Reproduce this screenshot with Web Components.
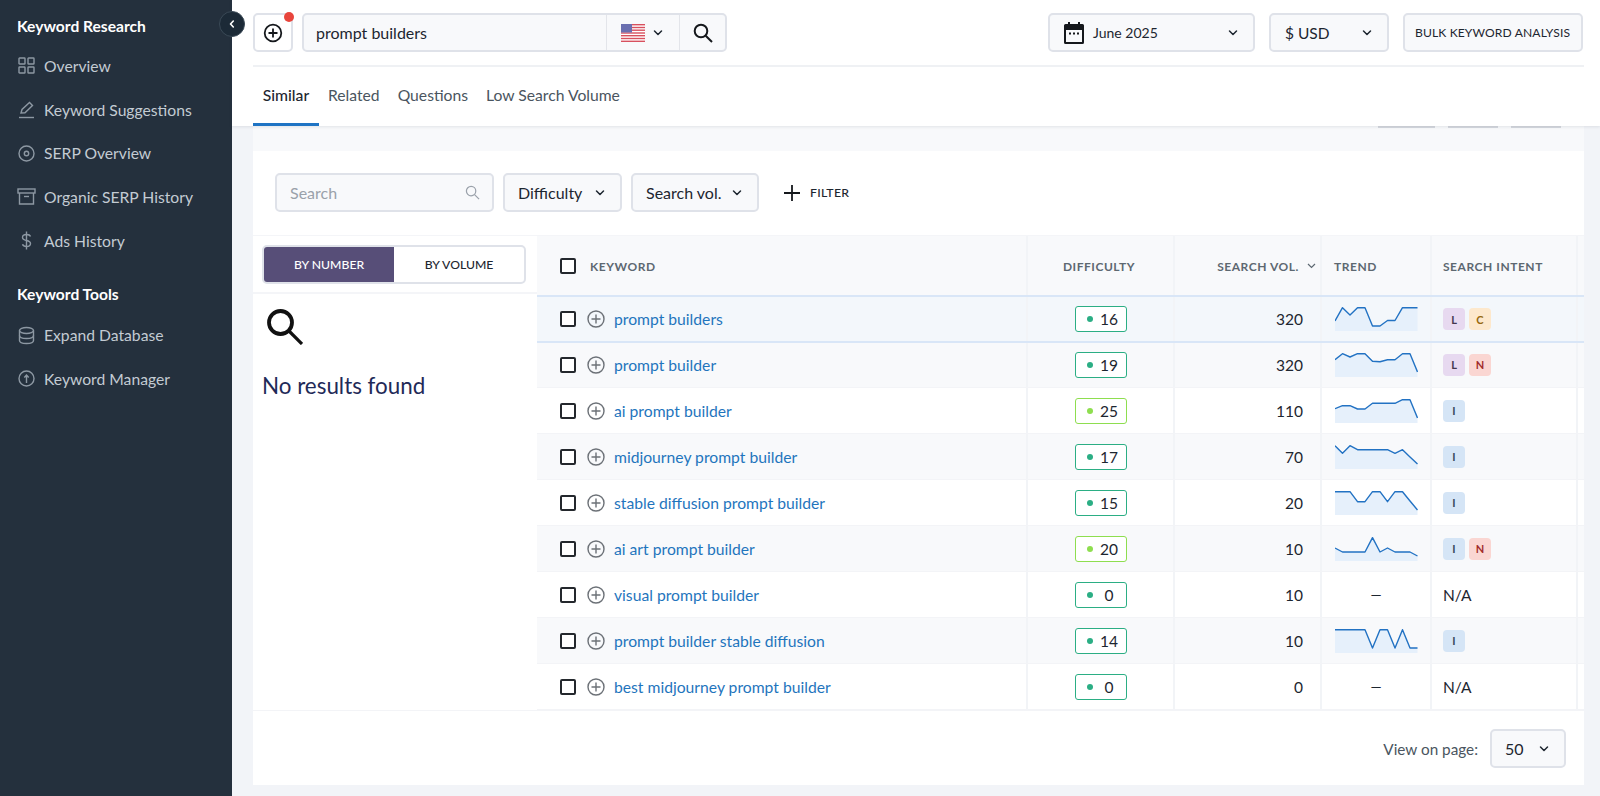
<!DOCTYPE html>
<html lang="en">
<head>
<meta charset="utf-8">
<title>Keyword Research</title>
<style>
  html, body { margin: 0; height: 100%; }
  body { font-family: Lato, "Liberation Sans", sans-serif; color: #1d2630; background: #f2f4f8; overflow: hidden; }
</style>
</head>
<body>
<app-shell>
  <side-nav slot="side">
    <nav-title>Keyword Research</nav-title>
    <nav-item icon="grid">Overview</nav-item>
    <nav-item icon="pen">Keyword Suggestions</nav-item>
    <nav-item icon="target">SERP Overview</nav-item>
    <nav-item icon="box">Organic SERP History</nav-item>
    <nav-item icon="dollar">Ads History</nav-item>
    <nav-title second>Keyword Tools</nav-title>
    <nav-item icon="db">Expand Database</nav-item>
    <nav-item icon="up">Keyword Manager</nav-item>
  </side-nav>
  <top-header></top-header>
  <result-card>
    <filter-bar></filter-bar>
    <group-panel slot="left"></group-panel>
    <keyword-table slot="right">
      <kw-row current diff="16" vol="320" trend="14,.7,8,.7,.7,19,19,13.5,13.5,.7,.7,.7" intents="L,C">prompt builders</kw-row>
      <kw-row shade diff="19" vol="320" trend="6.7,.7,4,.7,.7,8.3,8.7,6.7,6.7,.7,.7,19" intents="L,N">prompt builder</kw-row>
      <kw-row diff="25" vol="110" trend="9.7,6.7,6.7,10,10,4.3,4.3,4.3,4.3,.7,.7,19" intents="I">ai prompt builder</kw-row>
      <kw-row shade diff="17" vol="70" trend=".7,8.3,.7,4.7,4.7,4.7,4.7,4.7,8.3,4.7,12,19" intents="I">midjourney prompt builder</kw-row>
      <kw-row diff="15" vol="20" trend=".7,.7,.7,10.7,10.7,.7,.7,10.7,.7,.7,10,19" intents="I">stable diffusion prompt builder</kw-row>
      <kw-row shade diff="20" vol="10" trend="11,15,15,15,15,.7,15,11,15,15,15,19" intents="I,N">ai art prompt builder</kw-row>
      <kw-row diff="0" vol="10">visual prompt builder</kw-row>
      <kw-row shade diff="14" vol="10" trend=".7,.7,.7,.7,.7,19,.7,.7,19,.7,19,19" intents="I">prompt builder stable diffusion</kw-row>
      <kw-row diff="0" vol="0">best midjourney prompt builder</kw-row>
    </keyword-table>
    <page-footer slot="footer"></page-footer>
  </result-card>
</app-shell>

<script>
const CHEV = `<svg width="12" height="8" viewBox="0 0 12 8" fill="none" stroke="#1d2630" stroke-width="1.5" stroke-linecap="round" stroke-linejoin="round"><path d="M2.5 2l3.5 3.5L9.500 2"/></svg>`

const SIDE_ICONS = {
  grid: '<rect x="2" y="2" width="6" height="6" rx=".6"/><rect x="11" y="2" width="6" height="6" rx=".6"/><rect x="2" y="11" width="6" height="6" rx=".6"/><rect x="11" y="11" width="6" height="6" rx=".6"/>',
  pen: '<path d="M4 13l1-3.500L12.500 2.500l3 3L8 12.800z"/><path d="M2 17.500h15"/>',
  target: '<circle cx="9.500" cy="9.500" r="7.500"/><circle cx="9.500" cy="9.500" r="2.200"/>',
  box: '<rect x="1" y="2" width="17" height="4"/><path d="M2.500 6v11h14V6"/><path d="M7 9.500h5"/>',
  dollar: '<path d="M13.500 5.500C13 4 11.500 3.500 9.500 3.500c-2.300 0-4 1-4 3s1.700 2.500 4 3 4 1 4 3-1.700 3-4 3c-2 0-3.500-.7-4-2.200"/><path d="M9.500 .5v18"/>',
  db: '<ellipse cx="9.500" cy="4.500" rx="7" ry="3"/><path d="M2.500 4.500v10c0 1.700 3.100 3 7 3s7-1.300 7-3v-10"/><path d="M2.500 9.500c0 1.700 3.100 3 7 3s7-1.300 7-3"/>',
  up: '<circle cx="9.500" cy="9.500" r="7.500"/><path d="M9.500 14V6.500M7.300 8.500l2.200-2.500 2.200 2.500"/>'
}

class AppShell extends HTMLElement {
  constructor () {
    super()
    this.shadowDOM = this.attachShadow({ mode: 'open' })
  }

  connectedCallback () {
    this.shadowDOM.innerHTML = `
    <style>
      :host { display: grid; grid-template-columns: 232px 1fr; height: 796px; position: relative; }
      .main { display: flex; flex-direction: column; min-width: 0; }
      .toggle {
        position: absolute; left: 219px; top: 11px; width: 24px; height: 24px; border-radius: 50%; z-index: 5;
        background: #1c2a37; border: 1px solid #3a4956; display: flex; align-items: center; justify-content: center;
      }
    </style>
    <slot name="side"></slot>
    <div class="main"><slot></slot></div>
    <div class="toggle"><svg width="10" height="10" viewBox="0 0 10 10" fill="none" stroke="#fff" stroke-width="1.600" stroke-linecap="round" stroke-linejoin="round"><path d="M6.300 2L3.500 5l2.800 3"/></svg></div>
    `
  }
}

class SideNav extends HTMLElement {
  constructor () {
    super()
    this.shadowDOM = this.attachShadow({ mode: 'open' })
  }

  connectedCallback () {
    this.shadowDOM.innerHTML = `
    <style>
      :host { display: block; background: #24303d; padding: 15px 0 0 17px; height: 796px; box-sizing: border-box; }
    </style>
    <slot></slot>
    `
  }
}

class NavTitle extends HTMLElement {
  constructor () {
    super()
    this.shadowDOM = this.attachShadow({ mode: 'open' })
  }

  connectedCallback () {
    this.shadowDOM.innerHTML = `
    <style>
      :host { display: block; font-size: 15.600px; line-height: 22px; font-weight: 700; color: #fff; margin-bottom: 7px; }
      :host([second]) { margin-top: 21px; margin-bottom: 8px; }
    </style>
    <slot></slot>
    `
  }
}

class NavItem extends HTMLElement {
  constructor () {
    super()
    this.shadowDOM = this.attachShadow({ mode: 'open' })
  }

  connectedCallback () {
    this.shadowDOM.innerHTML = `
    <style>
      :host { display: flex; align-items: center; gap: 8px; height: 43.700px; font-size: 15.700px; color: #c3cbd3; }
      svg { flex: none; }
    </style>
    <svg width="19" height="19" viewBox="0 0 19 19" fill="none" stroke="#8d98a3" stroke-width="1.400">${SIDE_ICONS[this.getAttribute('icon')]}</svg>
    <slot></slot>
    `
  }
}

class BoxField extends HTMLElement {
  constructor () {
    super()
    this.shadowDOM = this.attachShadow({ mode: 'open' })
  }

  connectedCallback () {
    this.shadowDOM.innerHTML = `
    <style>
      :host {
        display: flex; align-items: center; box-sizing: border-box; height: 39px; padding: 0 14px 0 13px;
        background: #f8f9fb; border: 2px solid #dfe2e9; border-radius: 5px; font-size: 16px; color: #1d2630; flex: none;
        width: var(--w, auto); justify-content: space-between;
      }
    </style>
    <slot></slot>
    ${this.hasAttribute('chev') ? CHEV : ''}
    `
  }
}

class TopHeader extends HTMLElement {
  constructor () {
    super()
    this.shadowDOM = this.attachShadow({ mode: 'open' })
  }

  connectedCallback () {
    this.shadowDOM.innerHTML = `
    <style>
      :host { display: block; background: #fff; padding: 13px 17px 0 21px; position: relative; box-shadow: 0 1px 3px rgba(60,70,90,.12); z-index: 2; }
      .row { display: flex; align-items: center; }
      .line { height: 2px; background: #eff1f4; margin-top: 13px; margin-right: -1px; }
      .add { position: relative; --w: 40px; padding: 0; justify-content: center; background: #fff; margin-right: 9px; }
      .dot { position: absolute; right: -3px; top: -1px; width: 10px; height: 10px; margin-top: -2px; border-radius: 50%; background: #e8453c; }
      .group { display: flex; align-items: center; height: 39px; width: 425px; box-sizing: border-box; background: #f8f9fb; border: 2px solid #dfe2e9; border-radius: 5px; font-size: 16px; }
      .term { flex: 1; padding-left: 12px; }
      .flag { width: 74px; height: 100%; border-left: 1px solid #e3e5ea; border-right: 1px solid #e3e5ea; display: flex; align-items: center; padding-left: 14px; gap: 7px; box-sizing: border-box; }
      .go { width: 45px; display: flex; justify-content: center; }
      .end { margin-left: auto; display: flex; gap: 14px; }
      .date { --w: 207px; font-size: 14px; padding: 0 14px 0 13px; }
      .date span { flex: 1; display: flex; align-items: center; gap: 8px; }
      .cur { --w: 120px; font-size: 15.500px; padding: 0 14px; }
      .bulk { font-size: 12.100px; padding: 0 10px; --w: 180px; letter-spacing: .01em; }
      nav { display: flex; height: 59px; align-items: flex-start; }
      nav a { display: flex; align-items: center; height: 56px; padding: 0 9px; font-size: 15.700px; color: #4a5560; }
      nav a.on { color: #1d2630; border-bottom: 3px solid #1f74c4; width: 66px; height: 59px; box-sizing: border-box; padding: 0; justify-content: center; font-weight: 500; }
    </style>
    <div class="row">
      <box-field class="add">
        <svg width="20" height="20" viewBox="0 0 20 20" fill="none" stroke="#15181c" stroke-width="1.800"><circle cx="10" cy="10" r="8.300"/><path d="M10 5.500v9M5.500 10h9"/></svg>
        <i class="dot"></i>
      </box-field>
      <div class="group">
        <div class="term">prompt builders</div>
        <div class="flag">
          <svg width="24" height="18" viewBox="0 0 24 18"><rect width="24" height="18" rx="2" fill="#fff"/><g fill="#d8505e"><rect width="24" height="1.400" y="0"/><rect width="24" height="1.400" y="2.800"/><rect width="24" height="1.400" y="5.500"/><rect width="24" height="1.400" y="8.300"/><rect width="24" height="1.400" y="11"/><rect width="24" height="1.400" y="13.800"/><rect width="24" height="1.400" y="16.600"/></g><rect width="11" height="8.500" fill="#6a6fb0"/></svg>
          ${CHEV}
        </div>
        <div class="go"><svg width="22" height="22" viewBox="0 0 22 22" fill="none" stroke="#15181c" stroke-width="2"><circle cx="9" cy="9" r="6.300"/><path d="M13.700 13.700L20 20"/></svg></div>
      </div>
      <div class="end">
        <box-field class="date" chev><span>
          <svg width="22" height="24" viewBox="0 0 22 24"><path fill="#15181c" d="M5 1h2v2h8V1h2v2h2.500A1.500 1.500 0 0 1 21 4.500v17a1.500 1.500 0 0 1-1.500 1.500h-17A1.500 1.500 0 0 1 1 21.500v-17A1.500 1.500 0 0 1 2.500 3H5zM3 9v12h16V9z"/><g fill="#15181c"><rect x="6" y="11.500" width="2" height="2"/><rect x="10" y="11.500" width="2" height="2"/><rect x="14" y="11.500" width="2" height="2"/></g></svg>
          June 2025</span></box-field>
        <box-field class="cur" chev>$ USD</box-field>
        <box-field class="bulk">BULK KEYWORD ANALYSIS</box-field>
      </div>
    </div>
    <div class="line"></div>
    <nav>
      <a class="on">Similar</a><a>Related</a><a>Questions</a><a>Low Search Volume</a>
    </nav>
    `
  }
}

class ResultCard extends HTMLElement {
  constructor () {
    super()
    this.shadowDOM = this.attachShadow({ mode: 'open' })
  }

  connectedCallback () {
    this.shadowDOM.innerHTML = `
    <style>
      :host { display: block; margin: 0 16px 0 21px; }
      .strip { height: 25px; background: #f8f9fb; display: flex; justify-content: flex-end; gap: 13px; padding-right: 23px; }
      .strip i { width: 50px; height: 1.500px; background: #d5d8de; }
      .card { background: #fff; height: 634px; display: flex; flex-direction: column; }
      .body { display: grid; grid-template-columns: 284px 1fr; }
    </style>
    <div class="strip"><i style="width:57px"></i><i></i><i></i></div>
    <div class="card">
      <slot></slot>
      <div class="body">
        <slot name="left"></slot>
        <slot name="right"></slot>
      </div>
      <slot name="footer"></slot>
    </div>
    `
  }
}

class FilterBar extends HTMLElement {
  constructor () {
    super()
    this.shadowDOM = this.attachShadow({ mode: 'open' })
  }

  connectedCallback () {
    this.shadowDOM.innerHTML = `
    <style>
      :host { display: flex; align-items: center; gap: 9px; height: 85px; padding: 0 0 1px 22px; box-sizing: border-box; border-bottom: 1px solid #f4f5f8; }
      .find { --w: 219px; color: #9aa1aa; }
      .find svg { margin-right: -2px; }
      .dif { --w: 119px; } .vol { --w: 128px; }
      .add { display: flex; align-items: center; gap: 10px; margin-left: 16px; font-size: 12.300px; font-weight: 500; letter-spacing: .02em; color: #1d2630; }
    </style>
    <box-field class="find">Search
      <svg width="15" height="15" viewBox="0 0 16 16" fill="none" stroke="#9aa1aa" stroke-width="1.300"><circle cx="6.500" cy="6.500" r="5"/><path d="M10.200 10.200L15 15"/></svg>
    </box-field>
    <box-field class="dif" chev>Difficulty</box-field>
    <box-field class="vol" chev>Search vol.</box-field>
    <div class="add">
      <svg width="16" height="16" viewBox="0 0 16 16" stroke="#15181c" stroke-width="1.800"><path d="M8 0v16M0 8h16"/></svg>
      FILTER
    </div>
    `
  }
}

class GroupPanel extends HTMLElement {
  constructor () {
    super()
    this.shadowDOM = this.attachShadow({ mode: 'open' })
  }

  connectedCallback () {
    this.shadowDOM.innerHTML = `
    <style>
      :host { display: block; }
      .bar { padding: 9px 11px 8px 9px; border-bottom: 2px solid #f4f5f8; }
      .tog { display: grid; grid-template-columns: 130px 1fr; height: 39px; box-sizing: border-box; border: 2px solid #dfe2e9; border-radius: 5px; overflow: hidden; font-size: 12.200px; font-weight: 500; }
      .tog div { display: flex; align-items: center; justify-content: center; }
      .on { background: #574e78; color: #fff; }
      .empty { padding: 15px 9px; }
      svg { display: block; margin: 0 0 0 5px; }
      p { margin: 26px 0 0; font-size: 22.400px; line-height: 30px; color: #1f2a58; }
    </style>
    <div class="bar">
      <div class="tog"><div class="on">BY NUMBER</div><div>BY VOLUME</div></div>
    </div>
    <div class="empty">
      <svg width="36" height="36" viewBox="0 0 36 36" fill="none" stroke="#111" stroke-width="3.800"><circle cx="13.500" cy="13.500" r="11.500"/><path d="M22 22L35 35" stroke-width="3.200"/></svg>
      <p>No results found</p>
    </div>
    `
  }
}

const TABLE_COLS = '489px 147px 147px 110px 146px 8px'

class KeywordTable extends HTMLElement {
  constructor () {
    super()
    this.shadowDOM = this.attachShadow({ mode: 'open' })
  }

  connectedCallback () {
    this.shadowDOM.innerHTML = `
    <style>
      :host { display: block; }
      .head { display: grid; grid-template-columns: ${TABLE_COLS}; height: 60px; background: #f8f9fb; font-size: 12px; font-weight: 700; letter-spacing: .045em; color: #5d6871; }
      .head > div { display: flex; align-items: center; border-left: 2px solid #f2f4f7; box-sizing: border-box; }
      .head > div:first-child { border-left: 0; padding-left: 23px; gap: 14px; }
      .c { justify-content: center; padding-right: 3px; }
      .r { justify-content: flex-end; padding-right: 4px; gap: 8px; }
      .l { padding-left: 12px; }
      .head > div.i { padding-left: 11px; }
      .box { width: 16px; height: 16px; box-sizing: border-box; border: 2px solid #24282d; border-radius: 2px; background: #fff; }
    </style>
    <div class="head">
      <div><span class="box"></span>KEYWORD</div>
      <div class="c">DIFFICULTY</div>
      <div class="r">SEARCH VOL. <svg width="9" height="6" viewBox="0 0 9 6" fill="none" stroke="#5d6871" stroke-width="1.200"><path d="M1 1l3.500 3.500L8 1"/></svg></div>
      <div class="l">TREND</div>
      <div class="l i">SEARCH INTENT</div>
      <div></div>
    </div>
    <slot></slot>
    `
  }
}

const INTENT_COLORS = {
  L: ['#e7d9f0', '#43364f'],
  C: ['#fde8cc', '#96690f'],
  N: ['#fad6d2', '#a12b2b'],
  I: ['#d5e5f6', '#34475b']
}

class KwRow extends HTMLElement {
  constructor () {
    super()
    this.shadowDOM = this.attachShadow({ mode: 'open' })
  }

  sparkline () {
    const vals = (this.getAttribute('trend') || '').split(',').map(Number)
    const pts = vals.map((v, i) => `${(i * 7.5).toFixed(1)},${v}`).join(' ')
    return `<svg width="83" height="24" viewBox="0 0 83 24" fill="none"><polygon points="0,24 ${pts} 82.500,24" fill="#e6f0fb"/><polyline points="${pts}" stroke="#2272c3" stroke-width="1.400" stroke-linejoin="round"/></svg>`
  }

  connectedCallback () {
    const diff = Number(this.getAttribute('diff'))
    const intents = this.getAttribute('intents')
    const tone = diff >= 20 ? '#8ede4f' : '#2bae84'
    const tags = intents
      ? intents.split(',').map(k => `<b style="background:${INTENT_COLORS[k][0]};color:${INTENT_COLORS[k][1]}">${k}</b>`).join('')
      : 'N/A'
    this.shadowDOM.innerHTML = `
    <style>
      :host { display: grid; grid-template-columns: ${TABLE_COLS}; height: 46px; box-sizing: border-box; background: #fff; font-size: 15.500px; color: #1d2630; border-bottom: 1px solid #f3f4f7; }
      :host([shade]) { background: #f8f9fb; }
      :host([current]) { background: #f3f7fb; border-top: 2px solid #d9e6f7; border-bottom: 2px solid #d9e6f7; margin: -1px 0; height: 48px; position: relative; z-index: 1; }
      .cell { display: flex; align-items: center; border-left: 2px solid #f2f4f7; box-sizing: border-box; min-width: 0; }
      .kw { border-left: 0; padding-left: 23px; }
      .box { width: 16px; height: 16px; box-sizing: border-box; border: 2px solid #24282d; border-radius: 2px; background: #fff; margin-right: 11px; }
      .plus { margin-right: 9px; }
      a { color: #1f75bd; font-size: 15.700px; }
      .dif { justify-content: center; }
      .badge { display: flex; align-items: center; width: 52px; height: 26px; box-sizing: border-box; padding-left: 11px; border: 1px solid ${tone}; border-radius: 3px; background: #fff; font-size: 15.500px; }
      .badge i { width: 6px; height: 6px; border-radius: 50%; background: ${tone}; flex: none; }
      .badge span { flex: 1; text-align: center; }
      .vol { justify-content: flex-end; padding-right: 17px; }
      .trend { padding-left: 13px; }
      .dash { padding-left: 0; justify-content: center; font-size: 14px; }
      .int { padding-left: 11px; gap: 4px; }
      b { width: 22px; height: 22px; border-radius: 4px; display: flex; align-items: center; justify-content: center; font-size: 11px; font-weight: 700; }
    </style>
    <div class="cell kw">
      <span class="box"></span>
      <svg class="plus" width="18" height="18" viewBox="0 0 18 18" fill="none" stroke="#6c7177" stroke-width="1.400"><circle cx="9" cy="9" r="8"/><path d="M9 4.500v9M4.500 9h9"/></svg>
      <a><slot></slot></a>
    </div>
    <div class="cell dif"><div class="badge"><i></i><span>${diff}</span></div></div>
    <div class="cell vol">${this.getAttribute('vol')}</div>
    ${intents ? `<div class="cell trend">${this.sparkline()}</div>` : '<div class="cell dash">—</div>'}
    <div class="cell int">${tags}</div>
    <div class="cell"></div>
    `
  }
}

class PageFooter extends HTMLElement {
  constructor () {
    super()
    this.shadowDOM = this.attachShadow({ mode: 'open' })
  }

  connectedCallback () {
    this.shadowDOM.innerHTML = `
    <style>
      :host { display: flex; justify-content: flex-end; align-items: center; gap: 12px; padding: 18px 18px 0 0; font-size: 15.300px; color: #4a5560; border-top: 1px solid #f3f4f7; }
      box-field { --w: 76px; font-size: 16px; }
    </style>
    View on page:
    <box-field chev>50</box-field>
    `
  }
}

customElements.define('app-shell', AppShell)
customElements.define('side-nav', SideNav)
customElements.define('nav-title', NavTitle)
customElements.define('nav-item', NavItem)
customElements.define('box-field', BoxField)
customElements.define('top-header', TopHeader)
customElements.define('result-card', ResultCard)
customElements.define('filter-bar', FilterBar)
customElements.define('group-panel', GroupPanel)
customElements.define('keyword-table', KeywordTable)
customElements.define('kw-row', KwRow)
customElements.define('page-footer', PageFooter)
</script>
</body>
</html>
